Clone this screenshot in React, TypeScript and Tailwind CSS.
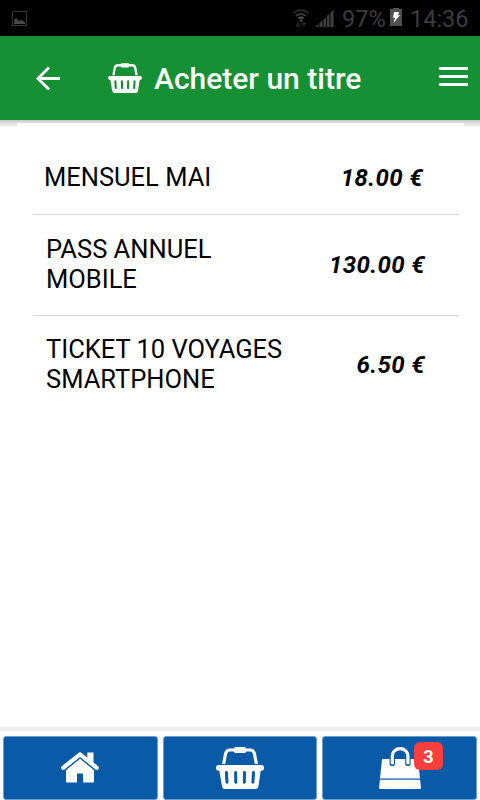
import React from 'react';

const items = [
  { name: 'MENSUEL MAI', price: '18.00 €', row: 'h-[74px] pl-[11px] pr-[36px]', line: 'border-b' },
  { name: 'PASS ANNUEL MOBILE', price: '130.00 €', row: 'h-[101px] pl-[13px] pr-[34px]', line: 'border-b' },
  { name: 'TICKET 10 VOYAGES SMARTPHONE', price: '6.50 €', row: 'h-[98px] pl-[13px] pr-[34px]', line: '' },
];

const Basket = ({ className, hole }: { className: string; hole: string }) => (
  <svg viewBox="0 0 48 42" className={className} fill="none">
    <path d="M7.6 17L9.6 6.5Q10.4 3 14 3H34Q37.6 3 38.4 6.5L40.4 17" stroke="white" strokeWidth="3.2" />
    <rect x="18" y="0" width="12" height="6" rx="1.5" fill="white" />
    <path d="M2.5 18H45.5Q48 18 48 20.8Q48 23.7 45.5 23.7H44.7L42.4 39.5Q42 42 39.5 42H8.8Q6.5 42 6 39.5L3.3 23.7H2.5Q0 23.7 0 20.8Q0 18 2.5 18Z" fill="white" />
    <path d="M10.4 25.6L11 35.2M19.6 25.6L19.8 35.2M28.5 25.6L28.3 35.2M37.5 25.6L36.9 35.2" stroke={hole} strokeWidth="3" strokeLinecap="round" />
  </svg>
);

const Home = () => (
  <svg viewBox="0 0 38 31" className="mb-[2px] mr-px h-[31px] w-[38px]" fill="white">
    <path d="M26.3 .5H32.5V12L26.3 7Z" />
    <path d="M2.2 15.8L19 2.3L35.8 15.8" fill="none" stroke="white" strokeWidth="4.2" strokeLinecap="round" strokeLinejoin="round" />
    <path d="M5 18L19 6.6L33 18V29.5Q33 30.6 32 30.6H22V21.6H16V30.6H6Q5 30.6 5 29.5Z" />
    <path d="M4.5 17.8L19 6L33.5 17.8" fill="none" stroke="#095ba8" strokeWidth="1" />
  </svg>
);

const Bag = () => (
  <svg viewBox="0 0 42 42" className="h-[42px] w-[42px]" fill="none">
    <path d="M4 12H38Q39 12 39.1 13L41 31.6H1L2.9 13Q3 12 4 12ZM.9 32.8H41.1L42 41Q42 42 41 42H1Q0 42 .1 41Z" fill="white" />
    <path d="M13.3 12V16.4M28.9 12V16.4" stroke="#095ba8" strokeWidth="5.4" strokeLinecap="round" />
    <path d="M13.3 16V9.5C13.3 -.9 28.9 -.9 28.9 9.5V16" stroke="white" strokeWidth="3.2" strokeLinecap="round" />
  </svg>
);

const StatusBar = () => (
  <div className="flex h-9 items-center bg-black pl-3 text-[23.5px] text-[#3c3c3c]">
    <svg viewBox="0 0 15 15" className="h-[15px] w-[15px]" fill="#484848">
      <rect x=".5" y=".5" width="14" height="14" fill="none" stroke="#333" />
      <path d="M2 13V9L4 7L7 10L9 9L13 11V13Z" />
    </svg>
    <svg viewBox="0 0 16 19" className="ml-[266px] h-[19px] w-4" fill="none" stroke="#282828" strokeWidth="1.8">
      <path d="M.5 4Q8 -2 15.5 4" />
      <path d="M3 7Q8 3 13 7" stroke="#383838" />
      <path d="M5.5 9.5Q8 7.5 10.5 9.5" stroke="#555" />
      <circle cx="8" cy="11.5" r="1" fill="#777" stroke="none" />
      <path d="M5 13V17M3 15.5L5 17.5L7 15.5M11 18V14M9 15.5L11 13.5L13 15.5" strokeWidth="1.2" />
    </svg>
    <svg viewBox="0 0 19 19" className="ml-[6px] h-[19px] w-[19px]" fill="#404040">
      <path d="M0 18L3.5 15V18ZM4.5 14L7.5 11.5V18H4.5ZM8.5 10.5L11 8V18H8.5ZM12 7L14.4 5V18H12ZM15.4 4L18.5 .5V18H15.4Z" />
    </svg>
    <span className="ml-[8px] mt-[3px] w-[43px] whitespace-nowrap">97%</span>
    <svg viewBox="0 0 12 18" className="mb-[2px] ml-[5px] h-[18px] w-3">
      <path d="M0 1H3V0H9V1H12V18H0Z" fill="#505050" />
      <path d="M4 4H9L8 7H10L3.5 15L5 10H3Z" fill="white" />
    </svg>
    <span className="ml-[8px] mt-[3px] whitespace-nowrap">14:36</span>
  </div>
);

export default function App() {
  return (
    <div className="flex h-[800px] w-[480px] flex-col overflow-hidden bg-white font-[Roboto,sans-serif] text-black">
      <StatusBar />
      <header className="flex h-[84px] items-center bg-[#159034] pl-9 pr-3">
        <svg viewBox="0 0 24 24" className="h-6 w-6" fill="none" stroke="white" strokeWidth="3">
          <path d="M24 12.5H2.5M13 1.5L2 12.5L13 23.5" />
        </svg>
        <Basket className="ml-12 h-[30px] w-[34px]" hole="#159034" />
        <h1 className="ml-[12px] whitespace-nowrap text-[30px] font-medium text-white">Acheter un titre</h1>
        <div className="mb-[4px] ml-auto flex w-[29px] flex-col gap-[5px]">
          <span className="h-[3px] bg-white" />
          <span className="h-[3px] bg-white" />
          <span className="h-[3px] bg-white" />
        </div>
      </header>
      <main className="flex-1 bg-linear-to-b from-[#c8c8c8] to-white bg-size-[100%_8px] bg-no-repeat pl-[17px] pr-4 pt-[3px]">
        <div className="bg-white pl-4 pr-[5px] pt-[18px]">
          {items.map((item) => (
            <div key={item.name} className={`flex items-center justify-between border-[#d8d8d8] ${item.row} ${item.line}`}>
              <span className="mb-[2px] w-[245px] text-[25.5px] leading-[30px]">{item.name}</span>
              <span className="whitespace-nowrap text-[24px] font-bold italic tracking-[0.4px]">{item.price}</span>
            </div>
          ))}
        </div>
      </main>
      <nav className="grid h-[73px] grid-cols-[155px_154px_155px] gap-[5px] border-t-4 border-[#eee] px-[3px] pt-[5px]">
        <button className="flex items-center justify-center rounded-[3px] border border-[#6c9dcb] bg-[#095ba8]">
          <Home />
        </button>
        <button className="flex items-center justify-center rounded-[3px] border border-[#6c9dcb] bg-[#095ba8]">
          <Basket className="h-[42px] w-12" hole="#095ba8" />
        </button>
        <button className="relative flex items-center justify-center rounded-[3px] border border-[#6c9dcb] bg-[#095ba8]">
          <Bag />
          <span className="absolute right-[33px] top-[5px] flex h-[28px] w-[29px] items-center justify-center rounded-[6px] bg-[#f93e3e] text-[18px] font-bold text-white">
            3
          </span>
        </button>
      </nav>
    </div>
  );
}
